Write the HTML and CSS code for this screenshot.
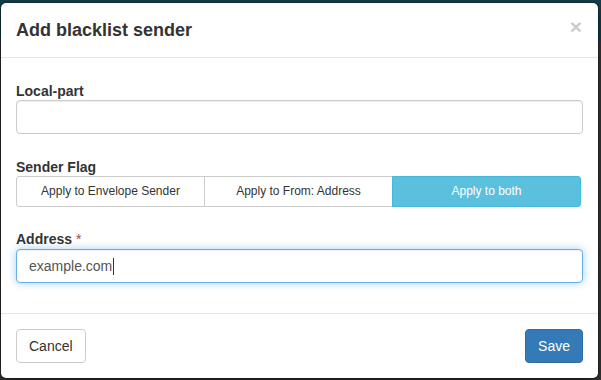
FILE: index.html
```html
<!DOCTYPE html>
<html>
<head>
<meta charset="utf-8">
<link rel="stylesheet" href="styles.css">
</head>
<body>
<div class="backdrop">
  <div class="modal">
    <div class="modal-header">
      <h4 class="modal-title">Add blacklist sender</h4>
      <span class="close">×</span>
    </div>
    <div class="modal-body">
      <div class="form-group">
        <label class="control-label">Local-part</label>
        <div class="form-control"></div>
      </div>
      <div class="form-group">
        <label class="control-label">Sender Flag</label>
        <div class="btn-group">
          <span class="btn-sm">Apply to Envelope Sender</span>
          <span class="btn-sm">Apply to From: Address</span>
          <span class="btn-sm active">Apply to both</span>
        </div>
      </div>
      <div class="form-group">
        <label class="control-label address-label">Address <span class="req">*</span></label>
        <div class="form-control focused">example.com<span class="caret"></span></div>
      </div>
    </div>
    <div class="modal-footer">
      <span class="btn btn-default">Cancel</span>
      <span class="btn btn-primary">Save</span>
    </div>
  </div>
</div>
</body>
</html>
```
FILE: styles.css
```css
* { box-sizing: border-box; }
html, body { margin: 0; padding: 0; }
body {
  width: 601px;
  height: 380px;
  overflow: hidden;
  font-family: "Liberation Sans", Arial, sans-serif;
  font-size: 14px;
  color: #333;
  background: linear-gradient(#173f4c 0, #173f4c 42px, #383838 42px);
}
.backdrop {
  padding-top: 2px;
}
.modal {
  width: 599px;
  background: #fff;
  border: 1px solid rgba(0,0,0,.2);
  border-radius: 6px;
  box-shadow: 0 5px 15px rgba(0,0,0,.5);
  background-clip: padding-box;
}
.modal-header {
  display: flex;
  justify-content: space-between;
  align-items: flex-start;
  padding: 15px;
  border-bottom: 1px solid #e5e5e5;
}
.modal-title {
  margin: 0;
  font-size: 18px;
  line-height: 24px;
  font-weight: bold;
  color: #333;
}
.close {
  font-size: 21px;
  font-weight: bold;
  line-height: 1;
  color: #000;
  opacity: .2;
  margin-top: -2px;
  margin-right: 1px;
}
.modal-body {
  padding: 15px;
}
.form-group {
  margin-bottom: 15px;
}
.control-label {
  display: block;
  padding-top: 9px;
  font-weight: bold;
  line-height: 18px;
}
.address-label {
  padding-top: 8px;
  padding-bottom: 1px;
}
.req { color: #a94442; font-weight: normal; }
.form-control {
  height: 34px;
  padding: 6px 12px;
  font-size: 14px;
  line-height: 20px;
  color: #555;
  background: #fff;
  border: 1px solid #ccc;
  border-radius: 4px;
  box-shadow: inset 0 1px 1px rgba(0,0,0,.075);
  display: flex;
  align-items: center;
}
.form-control.focused {
  border-color: #66afe9;
  box-shadow: inset 0 1px 1px rgba(0,0,0,.075), 0 0 8px rgba(102,175,233,.6);
}
.caret {
  display: inline-block;
  width: 1px;
  height: 17px;
  background: #333;
  margin-left: 1px;
}
.btn-group {
  display: flex;
  width: calc(100% - 2px);
}
.btn-sm {
  flex: 1 1 0;
  text-align: center;
  font-size: 12px;
  line-height: 19px;
  padding: 5px 10px;
  border: 1px solid #ccc;
  background: #fff;
  color: #333;
}
.btn-sm + .btn-sm { margin-left: -1px; }
.btn-sm:first-child { border-radius: 3px 0 0 3px; }
.btn-sm:last-child { border-radius: 0 3px 3px 0; }
.btn-sm.active {
  background: #5bc0de;
  border-color: #46b8da;
  color: #fff;
  position: relative;
}
.modal-footer {
  display: flex;
  justify-content: space-between;
  padding: 15px;
  border-top: 1px solid #e5e5e5;
}
.btn {
  display: inline-block;
  padding: 6px 12px;
  font-size: 14px;
  line-height: 20px;
  border: 1px solid transparent;
  border-radius: 4px;
}
.btn-default { background: #fff; border-color: #ccc; color: #333; }
.btn-primary { background: #337ab7; border-color: #2e6da4; color: #fff; }
```
